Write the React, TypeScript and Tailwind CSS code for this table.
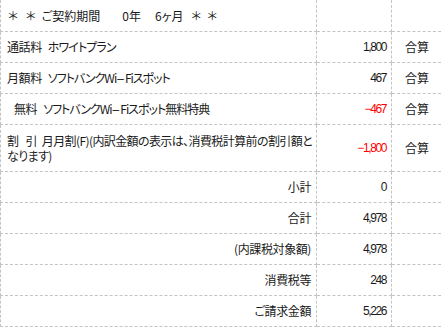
import React from "react";

type Row = {
  label: React.ReactNode;
  align?: "left" | "right";
  indent?: boolean;
  amount?: string;
  red?: boolean;
  note?: string;
  h: string;
};

const jp = "font-['Noto_Sans_CJK_JP','Noto_Sans_CJK_SC',sans-serif] [font-feature-settings:'palt']";

const Dash = () => <span className="font-['Liberation_Sans',sans-serif] tracking-normal mx-[1px]">–</span>;

const WiFiSpot = () => (
  <span className="tracking-[-1px]">
    ソフトバンクWi
    <Dash />
    Fiスポット
  </span>
);

const rows: Row[] = [
  {
    label: (
      <span className="flex items-center tracking-normal">
        <span className="ml-[1px]">＊</span>
        <span className="ml-[8px]">＊</span>
        <span className="ml-[6px]">ご契約期間</span>
        <span className="ml-[22px]">0年</span>
        <span className="ml-[14px]">6ヶ月</span>
        <span className="ml-[8px]">＊</span>
        <span className="ml-[6px]">＊</span>
      </span>
    ),
    h: "h-[32px]",
  },
  {
    label: (
      <>
        通話料<span className="ml-[6px] tracking-[-0.9px]">ホワイトプラン</span>
      </>
    ),
    amount: "1,800",
    note: "合算",
    h: "h-[31px]",
  },
  {
    label: (
      <>
        月額料
        <span className="ml-[6px]">
          <WiFiSpot />
        </span>
      </>
    ),
    amount: "467",
    note: "合算",
    h: "h-[31px]",
  },
  {
    label: (
      <>
        無料
        <span className="ml-[6px]">
          <WiFiSpot />
          <span className="tracking-[-1px]">無料特典</span>
        </span>
      </>
    ),
    indent: true,
    amount: "−467",
    red: true,
    note: "合算",
    h: "h-[31px]",
  },
  {
    label: (
      <div className="tracking-[-0.6px] leading-[15px]">
        <div>
          割<span className="ml-[7px]">引</span>
          <span className="ml-[5px]">月月割(F)(内訳金額の表示は、消費税計算前の割引額と</span>
        </div>
        <div>なります)</div>
      </div>
    ),
    amount: "−1,800",
    red: true,
    note: "合算",
    h: "h-[47px]",
  },
  { label: "小計", align: "right", amount: "0", h: "h-[31px]" },
  { label: "合計", align: "right", amount: "4,978", h: "h-[31px]" },
  { label: "(内課税対象額)", align: "right", amount: "4,978", h: "h-[31px]" },
  { label: "消費税等", align: "right", amount: "248", h: "h-[31px]" },
  { label: "ご請求金額", align: "right", amount: "5,226", h: "h-[31px]" },
];

export default function App() {
  return (
    <div className={`w-[441px] h-[328px] overflow-hidden bg-white text-[12px] text-[#1a1a1a] ${jp}`}>
      {rows.map((r, i) => (
        <div key={i} className={`grid grid-cols-[317px_75px_1fr] ${r.h}`}>
          <div
            className={`flex items-center border-l border-r border-b border-dashed border-[#c4c4c4] leading-[14px] whitespace-nowrap tracking-[-0.4px] ${
              r.align === "right" ? "justify-end pr-[5px]" : r.indent ? "pl-[13px] pr-[2px]" : "pl-[6px] pr-[2px]"
            }`}
          >
            <div className={r.align === "right" ? "text-right" : ""}>{r.label}</div>
          </div>
          <div className="flex items-center justify-end border-r border-b border-dashed border-[#c4c4c4] pr-[5px]">
            {r.amount && (
              <span
                className={`font-['Liberation_Sans',sans-serif] text-[12px] tracking-[-1.4px] ${
                  r.red ? "text-[#ff0000]" : "text-[#1a1a1a]"
                }`}
              >
                {r.amount}
              </span>
            )}
          </div>
          <div className="flex items-center border-b border-dashed border-[#c4c4c4] pl-[13px]">
            {r.note && <span>{r.note}</span>}
          </div>
        </div>
      ))}
    </div>
  );
}
